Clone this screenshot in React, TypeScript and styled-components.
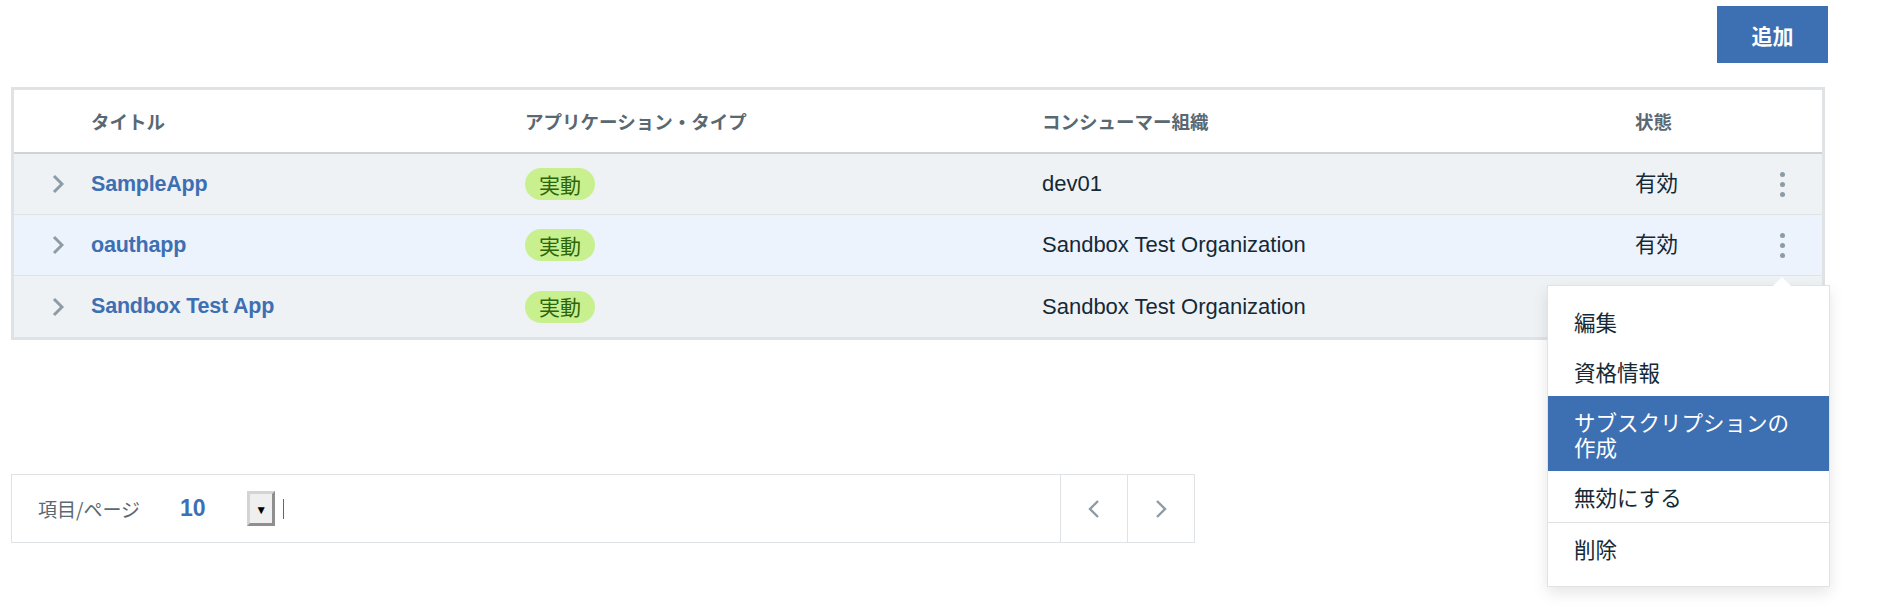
import styled, { createGlobalStyle } from "styled-components";

const GlobalStyle = createGlobalStyle`
  * { box-sizing: border-box; }
  body {
    margin: 0;
    background: #fff;
    font-family: "Liberation Sans", "Noto Sans CJK JP", sans-serif;
    color: #152935;
  }
`;

type App = {
  name: string;
  type: string;
  org: string;
  state: string;
  hover?: boolean;
  menu?: boolean;
};

const apps: App[] = [
  { name: "SampleApp", type: "実動", org: "dev01", state: "有効" },
  { name: "oauthapp", type: "実動", org: "Sandbox Test Organization", state: "有効", hover: true, menu: true },
  { name: "Sandbox Test App", type: "実動", org: "Sandbox Test Organization", state: "" },
];

const menuItems = ["編集", "資格情報", "サブスクリプションの作成", "無効にする"];

function Chevron({ dir = "right", weight = 2.4 }: { dir?: "left" | "right"; weight?: number }) {
  return (
    <svg width="12" height="20" viewBox="0 0 12 20">
      <polyline
        points={dir === "right" ? "2,2 10,10 2,18" : "10,2 2,10 10,18"}
        fill="none"
        stroke="#8c9ba5"
        strokeWidth={weight}
      />
    </svg>
  );
}

export default function App() {
  return (
    <>
      <GlobalStyle />
      <Page>
        <Toolbar>
          <AddButton>追加</AddButton>
        </Toolbar>

        <Table>
          <HeadRow>
            <span />
            <HeadCell>タイトル</HeadCell>
            <HeadCell>アプリケーション・タイプ</HeadCell>
            <HeadCell>コンシューマー組織</HeadCell>
            <HeadCell>状態</HeadCell>
            <span />
          </HeadRow>
          {apps.map((a) => (
            <Row key={a.name} $hover={a.hover}>
              <ExpandCell>
                <Chevron weight={3} />
              </ExpandCell>
              <TitleLink>{a.name}</TitleLink>
              <Cell>
                <Tag>{a.type}</Tag>
              </Cell>
              <OrgCell>{a.org}</OrgCell>
              <StateCell>{a.state}</StateCell>
              <KebabCell>
                {a.state && (
                  <Kebab>
                    <i />
                    <i />
                    <i />
                  </Kebab>
                )}
                {a.menu && (
                  <Menu>
                    {menuItems.map((m, i) => (
                      <MenuItem key={m} $active={i === 2}>
                        {m}
                      </MenuItem>
                    ))}
                    <MenuDivider />
                    <MenuItem>削除</MenuItem>
                  </Menu>
                )}
              </KebabCell>
            </Row>
          ))}
        </Table>

        <Pagination>
          <PerPage>
            <PerPageLabel>項目/ページ</PerPageLabel>
            <PerPageValue>10</PerPageValue>
            <SelectArrow>▼</SelectArrow>
            <Caret />
          </PerPage>
          <PageButton>
            <Chevron dir="left" />
          </PageButton>
          <PageButton>
            <Chevron />
          </PageButton>
        </Pagination>
      </Page>
    </>
  );
}

const Page = styled.div`
  min-height: 616px;
  padding: 6px 70px 0 11px;
`;

const Toolbar = styled.div`
  display: flex;
  justify-content: flex-end;
`;

const AddButton = styled.button`
  width: 111px;
  height: 57px;
  border: none;
  background: #3d70b2;
  color: #fff;
  font-family: "Noto Sans CJK JP", sans-serif;
  font-size: 21px;
  font-weight: 700;
  cursor: pointer;
`;

const Table = styled.div`
  margin: 24px 3px 0 0;
  border: 3px solid #dfe3e6;
  background: #fff;
`;

const cols = "77px 434px 517px 593px 1fr 80px";

const HeadRow = styled.div`
  display: grid;
  grid-template-columns: ${cols};
  align-items: center;
  height: 64px;
  border-bottom: 2px solid #cfd3d6;
`;

const HeadCell = styled.div`
  font-family: "Noto Sans CJK JP", sans-serif;
  font-size: 18.5px;
  font-weight: 700;
  color: #5a6872;
`;

const Row = styled.div<{ $hover?: boolean }>`
  display: grid;
  grid-template-columns: ${cols};
  align-items: center;
  height: 61px;
  background: ${(p) => (p.$hover ? "#ecf3fd" : "#eff2f5")};
  border-bottom: 1px solid #dfe3e6;
  &:last-child {
    border-bottom: none;
  }
`;

const Cell = styled.div`
  display: flex;
  align-items: center;
`;

const ExpandCell = styled(Cell)`
  justify-content: flex-end;
  padding-right: 27px;
`;

const TitleLink = styled.a`
  font-size: 21.5px;
  font-weight: 700;
  letter-spacing: -0.2px;
  color: #3d70b2;
  cursor: pointer;
`;

const Tag = styled.span`
  display: inline-flex;
  align-items: center;
  height: 32px;
  padding: 0 14px;
  border-radius: 16px;
  background: #c8f08f;
  color: #2d660a;
  font-family: "Noto Sans CJK JP", sans-serif;
  font-size: 21px;
  line-height: 1;
`;

const OrgCell = styled.div`
  font-size: 22px;
  color: #152935;
`;

const StateCell = styled.div`
  font-family: "Noto Sans CJK JP", sans-serif;
  font-size: 21.5px;
  line-height: 1;
  padding-bottom: 4px;
  color: #152935;
`;

const KebabCell = styled.div`
  position: relative;
  height: 100%;
  display: flex;
  align-items: center;
  justify-content: center;
`;

const Kebab = styled.div`
  display: flex;
  flex-direction: column;
  gap: 5px;
  cursor: pointer;
  i {
    display: block;
    width: 5px;
    height: 5px;
    border-radius: 50%;
    background: #8c9ba5;
  }
`;

const Menu = styled.div`
  position: absolute;
  top: calc(100% + 10px);
  right: -8px;
  width: 283px;
  padding: 10px 0 13px;
  background: #fff;
  border: 1px solid #dfe3e6;
  box-shadow: 0 6px 14px rgba(0, 0, 0, 0.1);
  z-index: 10;
  &::before {
    content: "";
    position: absolute;
    top: -9px;
    right: 38px;
    border-left: 9px solid transparent;
    border-right: 9px solid transparent;
    border-bottom: 9px solid #fff;
  }
`;

const MenuItem = styled.div<{ $active?: boolean }>`
  padding: 12.5px 30px 12.5px 26px;
  font-family: "Noto Sans CJK JP", sans-serif;
  font-size: 21.5px;
  line-height: 25px;
  background: ${(p) => (p.$active ? "#3d70b2" : "transparent")};
  color: ${(p) => (p.$active ? "#fff" : "#152935")};
  cursor: pointer;
`;

const MenuDivider = styled.div`
  height: 1px;
  margin-top: 1px;
  background: #dfe3e6;
`;

const Pagination = styled.div`
  display: flex;
  width: 1184px;
  height: 69px;
  margin-top: 134px;
  border: 1px solid #dfe3e6;
`;

const PerPage = styled.div`
  flex: 1;
  display: flex;
  align-items: center;
  padding-left: 26px;
`;

const PerPageLabel = styled.span`
  font-family: "Noto Sans CJK JP", sans-serif;
  font-size: 19px;
  color: #5a6872;
`;

const PerPageValue = styled.span`
  margin-left: 40px;
  width: 67px;
  font-size: 23px;
  font-weight: 700;
  color: #3d70b2;
`;

const SelectArrow = styled.span`
  display: inline-flex;
  align-items: center;
  justify-content: center;
  width: 28px;
  height: 35px;
  padding-top: 2px;
  background: #efefef;
  border: 3px solid #d4d4d4;
  border-right-color: #8f8f8f;
  border-bottom-color: #8f8f8f;
  font-size: 12px;
  color: #000;
`;

const Caret = styled.span`
  margin-left: 8px;
  width: 1px;
  height: 20px;
  background: #5a6872;
`;

const PageButton = styled.button`
  width: 67px;
  border: none;
  border-left: 1px solid #dfe3e6;
  background: #fff;
  display: flex;
  align-items: center;
  justify-content: center;
  cursor: pointer;
`;
